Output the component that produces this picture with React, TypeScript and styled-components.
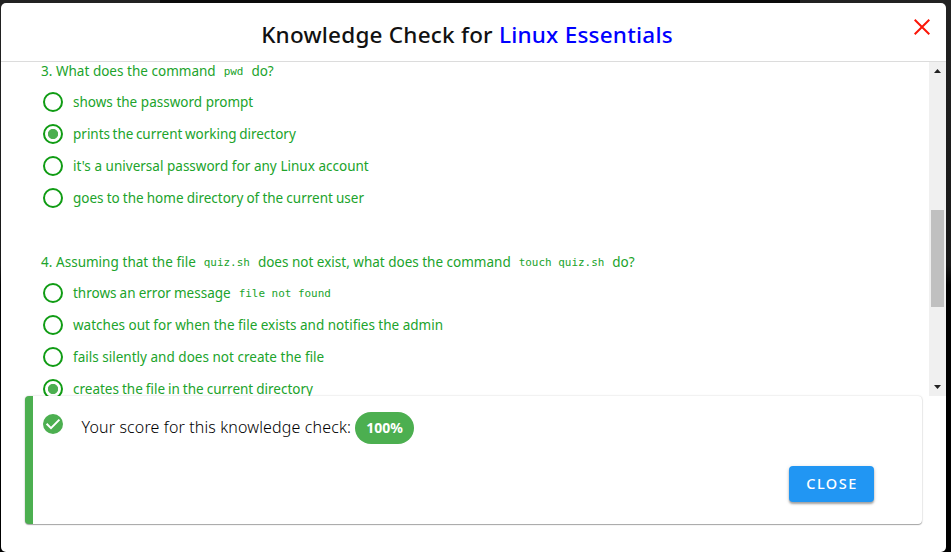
import React from "react";
import styled, { createGlobalStyle } from "styled-components";

const GlobalStyle = createGlobalStyle`
  *, *::before, *::after { box-sizing: border-box; }
  html, body { margin: 0; padding: 0; overflow: hidden; }
  body, button { font-family: "Noto Sans", "Open Sans", sans-serif; }
`;

const Backdrop = styled.div`
  width: 951px;
  height: 552px;
  padding: 3px 5px 0 1px;
  background:
    linear-gradient(#0b0b0b, #0b0b0b) 160px 0 / 640px 3px no-repeat,
    linear-gradient(#222 0, #181818 265px, #000 285px);
`;

const Dialog = styled.div`
  display: flex;
  flex-direction: column;
  height: 549px;
  background: #fff;
  border-radius: 5px;
  overflow: hidden;
`;

const Header = styled.header`
  display: grid;
  grid-template-columns: 1fr auto 1fr;
  flex: none;
  height: 59px;
  padding-right: 10px;
  border-bottom: 1px solid #dcdcdc;
`;

const Title = styled.h1`
  grid-column: 2;
  margin: 0 3px 0 0;
  font-size: 22.5px;
  line-height: 64px;
  font-weight: 500;
  letter-spacing: 0.22px;
  white-space: nowrap;
  color: #111;
`;

const Course = styled.span`
  color: #0000ff;
`;

const Dismiss = styled.button`
  justify-self: end;
  width: 28px;
  height: 47px;
  padding: 0;
  border: 0;
  background: none;
  display: flex;
  align-items: center;
  justify-content: center;
`;

const Body = styled.div`
  display: flex;
  height: 334px;
  flex: none;
  overflow: hidden;
`;

const Questions = styled.main`
  flex: 1;
  padding: 0 40px;
  overflow: hidden;
  color: #20a32b;
  font-size: 13.5px;
`;

const Question = styled.section`
  height: 191px;
`;

const Prompt = styled.div`
  height: 24px;
  line-height: 19px;
  white-space: nowrap;
`;

const Option = styled.label`
  display: flex;
  align-items: center;
  gap: 10px;
  height: 32px;
  padding-left: 2px;
  line-height: 20px;
  white-space: nowrap;
`;

const Phrase = styled.span<{ $gap?: number }>`
  word-spacing: ${(p) => p.$gap ?? 0}px;
`;

const Code = styled.code`
  margin: 0 8px;
  font-family: "DejaVu Sans Mono", monospace;
  font-size: 10.95px;
  line-height: 1;
  vertical-align: 1px;
`;

const Radio = styled.span<{ $checked?: boolean }>`
  width: 20px;
  height: 20px;
  flex: none;
  border: 2px solid #109c14;
  border-radius: 50%;
  background: ${(p) =>
    p.$checked ? "radial-gradient(circle, #4caf50 4.7px, #fff 5.5px)" : "#fff"};
`;

const Scrollbar = styled.div`
  display: flex;
  flex-direction: column;
  align-items: center;
  width: 17px;
  background: #f0f0f0;
`;

const Arrow = styled.svg`
  display: block;
  width: 17px;
  height: 17px;
  fill: #222;
`;

const Thumb = styled.div`
  width: 13px;
  height: 97px;
  margin: 131px 0 auto;
  background: #c0c0c0;
`;

const ScoreCard = styled.section`
  display: flex;
  flex: none;
  flex-direction: column;
  justify-content: space-between;
  width: 897px;
  height: 128px;
  margin-left: 24px;
  padding: 16px 48px 22px 10px;
  border-left: 8px solid #4caf50;
  border-radius: 4px;
  background: #fff;
  box-shadow: 0 1px 1px rgba(0, 0, 0, 0.32), 0 0 2px rgba(0, 0, 0, 0.2);
`;

const ScoreRow = styled.div`
  display: flex;
  align-items: center;
  height: 32px;
`;

const CheckIcon = styled.svg`
  width: 20px;
  height: 20px;
  margin: -8px 18.5px 0 0;
`;

const ScoreText = styled.span`
  width: 270.5px;
  padding-bottom: 2px;
  font-size: 16px;
  font-weight: 300;
  letter-spacing: 0.14px;
  white-space: nowrap;
  color: #000;
`;

const ScoreChip = styled.span`
  width: 59px;
  height: 32px;
  margin-left: 3px;
  border-radius: 16px;
  background: #4caf50;
  color: #fff;
  font-size: 14px;
  font-weight: 700;
  line-height: 32px;
  text-align: center;
`;

const CloseButton = styled.button`
  align-self: flex-end;
  width: 85px;
  height: 36px;
  padding: 0 0 2px 1px;
  border: 0;
  border-radius: 4px;
  background: #2196f3;
  box-shadow: 0 2px 2px rgba(0, 0, 0, 0.3), 0 1px 4px rgba(0, 0, 0, 0.14);
  color: #fff;
  font-size: 14.5px;
  font-weight: 500;
  letter-spacing: 1.5px;
`;

type Choice = { text: string; gap?: number; code?: string; checked?: boolean };

const directoryChoices: Choice[] = [
  { text: "shows the password prompt", gap: 0.1 },
  { text: "prints the current working directory", gap: -1, checked: true },
  { text: "it's a universal password for any Linux account", gap: 0.15 },
  { text: "goes to the home directory of the current user", gap: -0.39 },
];

const touchChoices: Choice[] = [
  { text: "throws an error message", gap: -0.4, code: "file not found" },
  { text: "watches out for when the file exists and notifies the admin" },
  { text: "fails silently and does not create the file", gap: 0.1 },
  { text: "creates the file in the current directory", gap: -0.5, checked: true },
];

function Choices({ items }: { items: Choice[] }) {
  return (
    <>
      {items.map((item) => (
        <Option key={item.text}>
          <Radio $checked={item.checked} />
          <span>
            <Phrase $gap={item.gap}>{item.text}</Phrase>
            {item.code && <Code>{item.code}</Code>}
          </span>
        </Option>
      ))}
    </>
  );
}

export default function App() {
  return (
    <>
      <GlobalStyle />
      <Backdrop>
        <Dialog>
          <Header>
            <Title>
              Knowledge Check for <Course>Linux Essentials</Course>
            </Title>
            <Dismiss aria-label="Dismiss">
              <svg width="16" height="16" viewBox="0 0 16 16" stroke="#fb1608" strokeWidth="2">
                <path d="M.7.7l14.6 14.6M15.3.7L.7 15.3" />
              </svg>
            </Dismiss>
          </Header>
          <Body>
            <Questions>
              <Question>
                <Prompt>
                  <Phrase $gap={0.1}>3. What does the command</Phrase>
                  <Code>pwd</Code>
                  <Phrase>do?</Phrase>
                </Prompt>
                <Choices items={directoryChoices} />
              </Question>
              <Question>
                <Prompt>
                  <Phrase $gap={0.25}>4. Assuming that the file</Phrase>
                  <Code>quiz.sh</Code>
                  <Phrase>does not exist, what does the command</Phrase>
                  <Code>touch quiz.sh</Code>
                  <Phrase>do?</Phrase>
                </Prompt>
                <Choices items={touchChoices} />
              </Question>
            </Questions>
            <Scrollbar>
              <Arrow viewBox="0 0 17 17">
                <path d="M5 11h7L8.5 7z" />
              </Arrow>
              <Thumb />
              <Arrow viewBox="0 0 17 17">
                <path d="M5 6h7L8.5 10z" />
              </Arrow>
            </Scrollbar>
          </Body>
          <ScoreCard>
            <ScoreRow>
              <CheckIcon viewBox="2 2 20 20">
                <circle cx="12" cy="12" r="10" fill="#4caf50" />
                <path
                  d="M5.6 11.8l4.4 4.4 8.4-8.6"
                  fill="none"
                  stroke="#fff"
                  strokeWidth="2"
                />
              </CheckIcon>
              <ScoreText>Your score for this knowledge check:</ScoreText>
              <ScoreChip>100%</ScoreChip>
            </ScoreRow>
            <CloseButton>CLOSE</CloseButton>
          </ScoreCard>
        </Dialog>
      </Backdrop>
    </>
  );
}
